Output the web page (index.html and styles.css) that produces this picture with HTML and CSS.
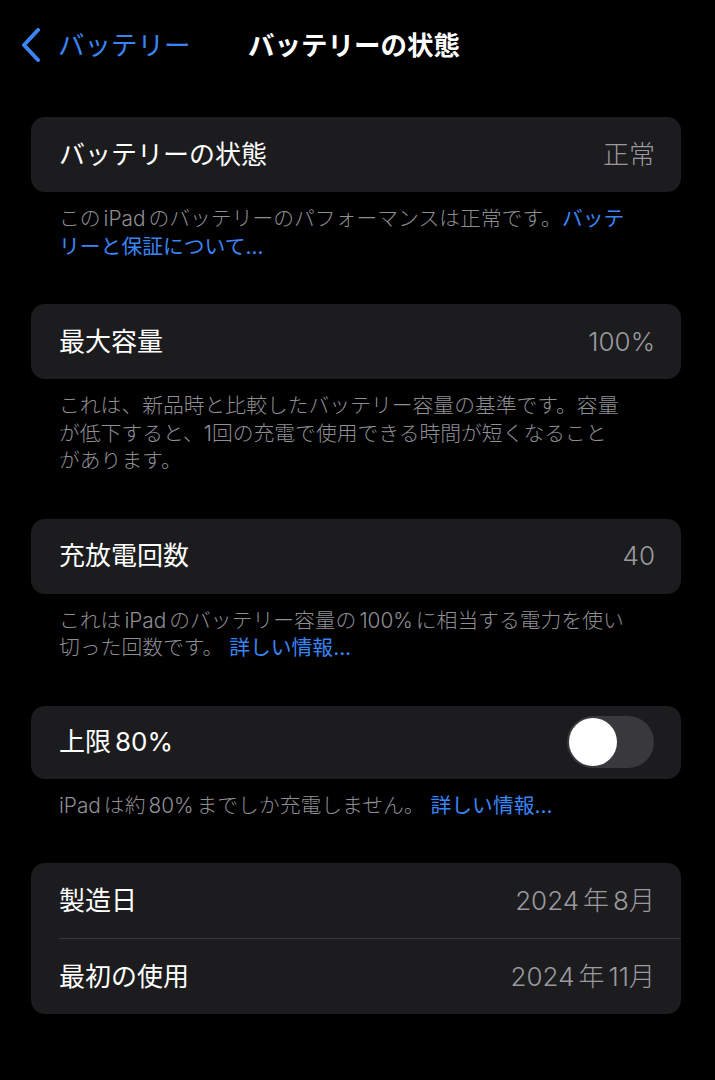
FILE: index.html
```html
<!DOCTYPE html>
<html lang="ja">
<head>
<meta charset="utf-8">
<link rel="stylesheet" href="styles.css">
</head>
<body>
<div class="screen">
  <header class="nav">
    <div class="back">
      <svg class="chev" width="22" height="34" viewBox="0 0 22 34"><path d="M18 2 L4 17 L18 32" fill="none" stroke="#3a85f6" stroke-width="4" stroke-linecap="round" stroke-linejoin="round"/></svg>
      <span class="back-label">バッテリー</span>
    </div>
    <div class="title">バッテリーの状態</div>
  </header>

  <section class="group">
    <div class="card">
      <div class="row"><span class="label">バッテリーの状態</span><span class="value">正常</span></div>
    </div>
    <p class="foot">この<span class="lat">iPad</span>のバッテリーのパフォーマンスは正常です。<span class="link">バッテ<br>リーと保証について...</span></p>
  </section>

  <section class="group">
    <div class="card">
      <div class="row"><span class="label">最大容量</span><span class="value">100%</span></div>
    </div>
    <p class="foot">これは、新品時と比較したバッテリー容量の基準です。容量<br>が低下すると、1回の充電で使用できる時間が短くなること<br>があります。</p>
  </section>

  <section class="group">
    <div class="card">
      <div class="row"><span class="label">充放電回数</span><span class="value">40</span></div>
    </div>
    <p class="foot">これは<span class="lat">iPad</span>のバッテリー容量の<span class="lat">100%</span>に相当する電力を使い<br>切った回数です。 <span class="link">詳しい情報...</span></p>
  </section>

  <section class="group">
    <div class="card">
      <div class="row row-toggle"><span class="label">上限<span class="lat lat-l">80%</span></span><span class="toggle"><span class="knob"></span></span></div>
    </div>
    <p class="foot"><span class="lat lat-start">iPad</span>は約<span class="lat">80%</span>までしか充電しません。 <span class="link">詳しい情報...</span></p>
  </section>

  <section class="group">
    <div class="card">
      <div class="row"><span class="label">製造日</span><span class="value">2024<span class="lat lat-v">年</span>8月</span></div>
      <div class="divider"></div>
      <div class="row"><span class="label">最初の使用</span><span class="value">2024<span class="lat lat-v">年</span>11月</span></div>
    </div>
  </section>
</div>
</body>
</html>
```
FILE: styles.css
```css
* { box-sizing: border-box; }
html, body { margin: 0; padding: 0; background: #000; }
body {
  font-family: Inter, "Noto Sans CJK JP", "Noto Sans", sans-serif;
  color: #fff;
  width: 715px;
  height: 1080px;
  overflow: hidden;
}
.screen { padding: 0 34px 0 31px; }
.nav {
  height: 90px;
  display: flex;
  align-items: center;
  margin-left: -11px;
}
.back {
  display: flex;
  align-items: center;
  gap: 16px;
  width: 228px;
}
.chev { display: block; }
.back-label {
  color: #3a85f6;
  font-size: 26.5px;
  line-height: 1;
}
.title {
  font-size: 26.5px;
  font-weight: 700;
  line-height: 1;
}
.group { margin-top: 27px; }
.group + .group { margin-top: 44px; }
.card {
  background: #1c1c1e;
  border-radius: 14px;
  width: 650px;
  overflow: hidden;
}
.row {
  height: 75px;
  display: flex;
  align-items: center;
  justify-content: space-between;
  padding: 0 26px 0 28px;
}
.row-toggle { height: 73px; padding-right: 27px; }
.label { font-size: 26px; line-height: 1; color: #fff; }
.value { font-size: 26px; line-height: 1; color: #9a9aa0; font-weight: 300; }
.lat { margin: 0 3px; }
.lat-start { margin-left: 0; }
.lat-l { margin: 0 0 0 4px; }
.lat-v { margin: 0 4px; }
.divider { height: 1px; background: #38383a; margin-left: 28px; }
.foot {
  margin: 13px 0 0;
  padding: 0 28px;
  font-size: 20.8px;
  line-height: 27.5px;
  color: #8e8e93;
  font-weight: 300;
}
.link { color: #3a85f6; font-weight: 400; }
.toggle {
  width: 87px;
  height: 52px;
  border-radius: 26px;
  background: #39393d;
  display: flex;
  align-items: center;
  padding: 2px;
}
.knob {
  width: 48px;
  height: 48px;
  border-radius: 50%;
  background: #fff;
}
```
